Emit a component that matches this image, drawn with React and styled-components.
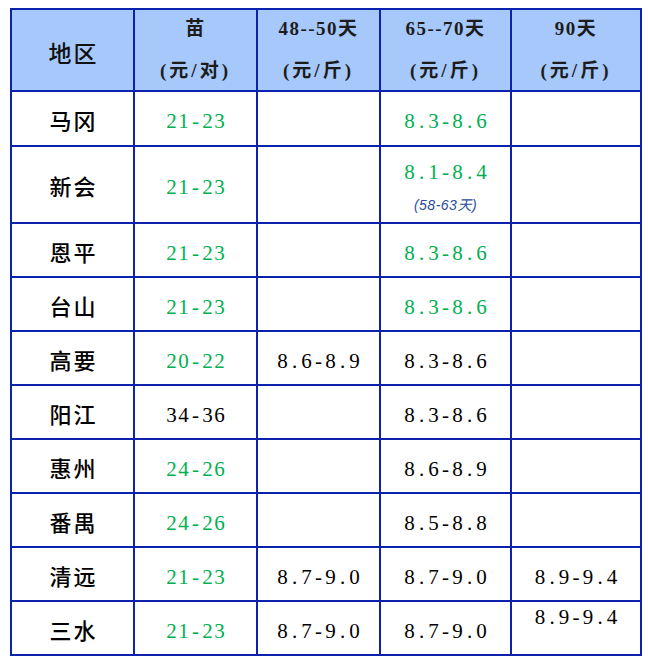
import React from "react";
import styled, { createGlobalStyle } from "styled-components";

const GlobalStyle = createGlobalStyle`
  body {
    margin: 0;
    background: #ffffff;
    font-family: "Liberation Serif", "Noto Sans CJK SC", serif;
  }
`;

const Page = styled.div`
  padding: 8px 0 0 10px;
`;

const Grid = styled.div`
  display: grid;
  grid-template-columns: 121px 121px 121px 129px 128px;
  grid-template-rows: 80px 53px 75px repeat(8, 52px);
  gap: 2px;
  width: fit-content;
  background: #0a22ac;
  border: 2px solid #0a22ac;
`;

const Cell = styled.div`
  background: ${(p) => (p.head ? "#a6c8fa" : "#ffffff")};
  display: flex;
  flex-direction: column;
  align-items: center;
  justify-content: ${(p) => (p.top ? "flex-start" : "center")};
  padding-top: ${(p) => (p.top ? "3px" : p.head ? "0" : "5px")};
  box-sizing: border-box;
`;

const HeadLine = styled.div`
  font-family: "Liberation Serif", "Noto Sans CJK SC", serif;
  font-size: 19px;
  font-weight: 600;
  line-height: 42px;
  letter-spacing: ${(p) => p.spacing || "0px"};
  color: #1c1c1c;
`;

const Region = styled.div`
  font-family: "Noto Sans CJK SC", sans-serif;
  font-size: 22px;
  font-weight: 500;
  letter-spacing: 2px;
  line-height: 26px;
  color: #000000;
  padding-left: 2px;
  margin-top: -4px;
`;

const HeadRegion = styled(Region)`
  margin-top: 4px;
  font-size: 23px;
  color: #111111;
`;

const Number = styled.div`
  display: flex;
  font-family: "Liberation Serif", serif;
  font-size: 21px;
  line-height: 24px;
  color: ${(p) => (p.green ? "#00b050" : "#000000")};
`;

const Char = styled.span`
  display: inline-block;
  width: 12px;
  text-align: center;
`;

const Note = styled.div`
  margin-top: 12px;
  font-family: "Liberation Sans", "Noto Sans CJK SC", sans-serif;
  font-size: 14px;
  font-style: italic;
  line-height: 18px;
  letter-spacing: 0.5px;
  color: #2a4d9a;
`;

const Num = ({ value, green }) => (
  <Number green={green}>
    {value.split("").map((c, i) => (
      <Char key={i}>{c}</Char>
    ))}
  </Number>
);

const rows = [
  { name: "马冈", cells: [["21-23", true], null, ["8.3-8.6", true], null] },
  {
    name: "新会",
    cells: [["21-23", true], null, ["8.1-8.4", true, "(58-63天)"], null],
  },
  { name: "恩平", cells: [["21-23", true], null, ["8.3-8.6", true], null] },
  { name: "台山", cells: [["21-23", true], null, ["8.3-8.6", true], null] },
  {
    name: "高要",
    cells: [["20-22", true], ["8.6-8.9"], ["8.3-8.6"], null],
  },
  { name: "阳江", cells: [["34-36"], null, ["8.3-8.6"], null] },
  { name: "惠州", cells: [["24-26", true], null, ["8.6-8.9"], null] },
  { name: "番禺", cells: [["24-26", true], null, ["8.5-8.8"], null] },
  {
    name: "清远",
    cells: [["21-23", true], ["8.7-9.0"], ["8.7-9.0"], ["8.9-9.4"]],
  },
  {
    name: "三水",
    cells: [["21-23", true], ["8.7-9.0"], ["8.7-9.0"], ["8.9-9.4", false, null, true]],
  },
];

const headers = [
  ["苗", "(元/对)"],
  ["48--50天", "(元/斤)"],
  ["65--70天", "(元/斤)"],
  ["90天", "(元/斤)"],
];

const App = () => (
  <>
    <GlobalStyle />
    <Page>
      <Grid>
        <Cell head>
          <HeadRegion>地区</HeadRegion>
        </Cell>
        {headers.map(([a, b], i) => (
          <Cell head key={i}>
            <HeadLine spacing="1.5px">{a}</HeadLine>
            <HeadLine spacing="3px">{b}</HeadLine>
          </Cell>
        ))}
        {rows.map((row) => (
          <React.Fragment key={row.name}>
            <Cell>
              <Region>{row.name}</Region>
            </Cell>
            {row.cells.map((c, i) =>
              c ? (
                <Cell key={i} top={c[3]}>
                  <Num value={c[0]} green={c[1]} />
                  {c[2] && <Note>{c[2]}</Note>}
                </Cell>
              ) : (
                <Cell key={i} />
              )
            )}
          </React.Fragment>
        ))}
      </Grid>
    </Page>
  </>
);

export default App;
